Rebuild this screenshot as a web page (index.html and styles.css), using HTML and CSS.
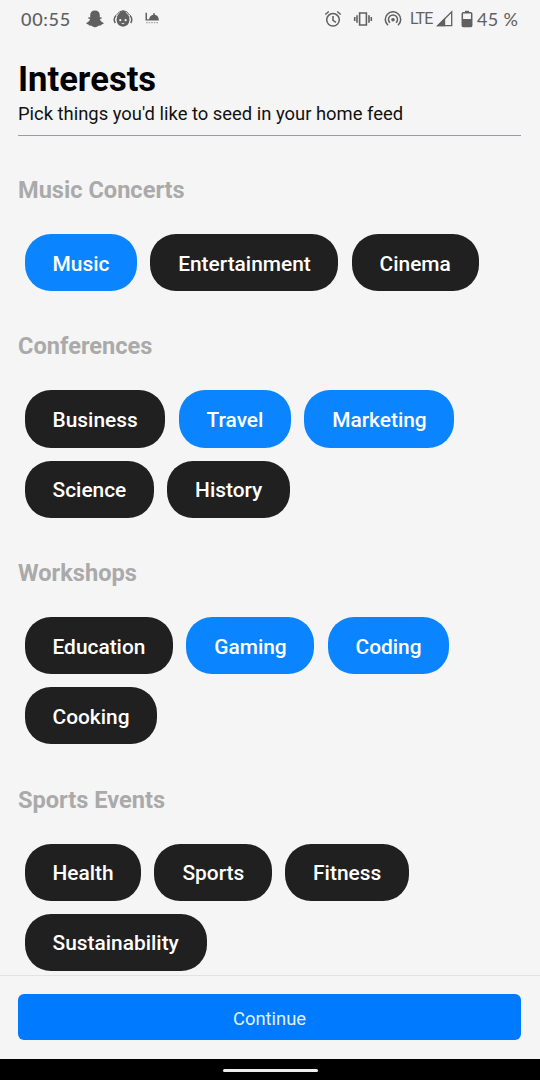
FILE: index.html
```html
<!DOCTYPE html>
<html lang="en">
<head>
<meta charset="utf-8">
<title>Interests</title>
<link rel="stylesheet" href="styles.css">
</head>
<body>
<div class="screen">
  <div class="status">
    <span class="clock">00:55</span>
    <svg class="ic-ghost" width="18" height="18" viewBox="0 0 18 18" fill="#606060"><path d="M9 .4c3 0 4.800 2 4.800 4.800v2.300l1.400-.3c.9.3.7 1.100-.1 1.500l-1.200.6c.7 1.700 1.900 3 3.800 3.600.3.9-1 1.300-2.200 1.500l-.4 1.100c-1.900-.3-2.500.1-3.400.8-1.800 1.400-3.600 1.400-5.400 0-.9-.7-1.500-1.100-3.400-.8l-.4-1.100C1.300 14.200 0 13.800.3 12.900c1.900-.6 3.100-1.900 3.800-3.600l-1.200-.6c-.8-.4-1-1.200-.1-1.500l1.400.3V5.200C4.200 2.400 6 .4 9 .4z"/></svg>
    <svg class="ic-face" width="20" height="18" viewBox="0 0 20 18" fill="none" stroke="#606060"><path d="M3 5.500Q-.2 9 2.300 13M17 5.500q3.200 3.500.7 7.500" stroke-width="1.500"/><path d="M3.300 5.200Q6.500.5 10 .7q4-.3 6.700 4.500" stroke-width="1"/><path d="M10 .7q3 .4 3.300 2.400 3.500 2.500 3.200 7-.7 6.200-6.500 6.700-5.800-.5-6.500-6.700Q3.500 5.600 6 3.500 7.400.8 10 .7z" fill="#606060" stroke="none"/><circle cx="7.300" cy="10.200" r="1.100" fill="#f5f5f5" stroke="none"/><circle cx="12.600" cy="10.200" r="1.100" fill="#f5f5f5" stroke="none"/><path d="M8.600 13.300q1.400.9 2.700 0" stroke="#f5f5f5" stroke-width=".9"/></svg>
    <svg class="ic-dish" width="14" height="13" viewBox="0 0 14 13" fill="#606060"><path d="M.5.800h1.500v7.400H.5zM2.200 7.200h11.600v1.300H.5V7.200zM4.100 7.400C4.300 4.300 6.500 2.900 8.200 2.700V1.200h1.600v1.500c2 .3 3.700 1.700 4 4.700z"/><path d="M1 10.600h12" stroke="#aaa" stroke-width="1.200" stroke-dasharray="1.600 1"/></svg>
    <svg class="ic-alarm" width="18" height="18" viewBox="0 0 18 18" fill="none" stroke="#606060" stroke-width="1.500"><circle cx="9" cy="9.800" r="6.300"/><path d="M1.300 4.500l3.500-3M16.700 4.500l-3.500-3M9 6v4.300l3 2"/></svg>
    <svg class="ic-vib" width="20" height="16" viewBox="0 0 20 16" fill="none" stroke="#606060" stroke-width="1.600"><path d="M6.600 2h6.800v12H6.600zM4 4.300v7.400M16 4.300v7.400M1.700 6v4M18.300 6v4"/></svg>
    <svg class="ic-cast" width="18" height="16" viewBox="0 0 18 16" fill="none" stroke="#606060" stroke-width="1.500"><path d="M4 14.300a7.700 7.700 0 1 1 10 0M6 11.800a4.500 4.500 0 1 1 6 0"/><circle cx="9" cy="8.800" r="1.800" fill="#606060" stroke="none"/></svg>
    <span class="lte">LTE</span>
    <svg class="ic-signal" width="17" height="17" viewBox="0 0 17 17"><path d="M1.700 15.700L15.700 1.700v14z" fill="none" stroke="#606060" stroke-width="1.300"/><path d="M.5 16.300L9.200 7.500v8.800z" fill="#606060"/></svg>
    <svg class="ic-batt" width="12" height="18" viewBox="0 0 12 18"><path d="M4 .8h4v2H4z" fill="#606060"/><rect x="1.300" y="2.700" width="9.400" height="13.800" rx="1" fill="none" stroke="#606060" stroke-width="1.500"/><path d="M1 9h10v8H1z" fill="#606060"/></svg>
    <span class="pct">45 %</span>
  </div>

  <main class="content">
    <header class="head">
      <h1 class="title">Interests</h1>
      <p class="subtitle">Pick things you'd like to seed in your home feed</p>
    </header>
    <section class="group">
      <h2 class="name">Music Concerts</h2>
      <div class="chips"><span class="chip on">Music</span><span class="chip">Entertainment</span><span class="chip">Cinema</span></div>
    </section>
    <section class="group">
      <h2 class="name">Conferences</h2>
      <div class="chips"><span class="chip">Business</span><span class="chip on">Travel</span><span class="chip on">Marketing</span><span class="chip">Science</span><span class="chip">History</span></div>
    </section>
    <section class="group">
      <h2 class="name">Workshops</h2>
      <div class="chips"><span class="chip">Education</span><span class="chip on">Gaming</span><span class="chip on">Coding</span><span class="chip">Cooking</span></div>
    </section>
    <section class="group">
      <h2 class="name">Sports Events</h2>
      <div class="chips"><span class="chip">Health</span><span class="chip">Sports</span><span class="chip">Fitness</span><span class="chip">Sustainability</span></div>
    </section>
  </main>

  <footer class="footer"><button class="continue">Continue</button></footer>
  <div class="navbar"><span class="handle"></span></div>
</div>
</body>
</html>
```

FILE: styles.css
```css
* { box-sizing: border-box; }
body { margin: 0; font-family: Roboto, sans-serif; background: #f5f5f5; }
h1, h2, p { margin: 0; }
.screen { display: flex; flex-direction: column; width: 540px; height: 1080px; overflow: hidden; background: #f5f5f5; }
.status { display: flex; align-items: center; flex: none; height: 37px; padding-left: 21px; color: #606060; white-space: nowrap; }
.status svg { flex: none; }
.clock { width: 65px; padding-top: 1px; font: 500 18px Lato, sans-serif; letter-spacing: .7px; }
.ic-face { margin-left: 9px; }
.ic-dish { margin-left: 12px; }
.ic-alarm { margin-left: 165px; }
.ic-vib { margin-left: 11px; }
.ic-cast { margin-left: 11px; }
.lte { width: 25px; margin-left: 8px; font-size: 16px; letter-spacing: -.9px; }
.ic-signal { margin-left: 1px; }
.ic-batt { margin-left: 8px; }
.pct { margin-left: 4px; padding-top: 1px; font: 18px Lato, sans-serif; letter-spacing: .3px; }
.content { flex: 1; min-height: 0; padding: 22px 19px 0 18px; overflow: hidden; }
.head { height: 77px; border-bottom: 1.500px solid #9a9da8; }
.title { font-size: 34.600px; line-height: 40px; font-weight: 700; color: #000; }
.subtitle { font-size: 18.400px; line-height: 24px; margin-top: 3px; color: #111; white-space: nowrap; }
.group { padding-top: 39.100px; }
.name { font-size: 23.600px; line-height: 30px; font-weight: 700; color: #aaa; }
.chips { display: flex; flex-wrap: wrap; gap: 13.100px; padding: 29px 0 1px 6.500px; }
.chip { display: flex; align-items: center; height: 57.200px; padding: 2px 27.700px 0 28px; border-radius: 26px; background: #202020; color: #fff; font-size: 20.900px; font-weight: 500; }
.chip.on { background: #0a84ff; }
.footer { flex: none; height: 84px; padding: 18px 19px 0 18px; border-top: 1.500px solid #e2e2e2; }
.continue { display: block; width: 100%; height: 46px; padding: 2px 0 0; border: 0; border-radius: 6px; background: #007aff; color: #e2f1ff; font: 18.400px Roboto, sans-serif; }
.navbar { display: flex; flex: none; justify-content: center; height: 21px; padding-top: 10px; background: #000; }
.handle { width: 95px; height: 3px; border-radius: 2px; background: #eee; }
```
